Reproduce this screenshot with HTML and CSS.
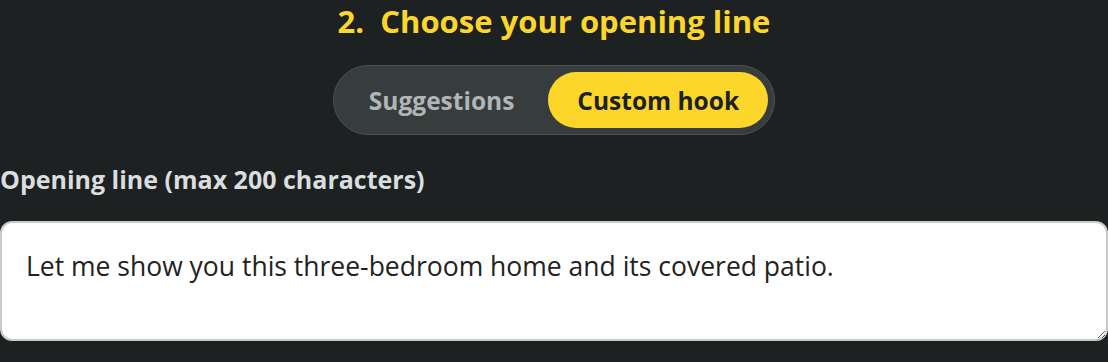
FILE: index.html
```
<!DOCTYPE html>
<html lang="en">
<head>
    <meta charset="UTF-8">
    <meta name="viewport" content="width=device-width, initial-scale=1.0">
    <title>Opening line</title>
    <link rel="stylesheet" href="styles.css">
</head>
<body>
    <div class="step">
        <h2 class="step-title">2.&nbsp; Choose your opening line</h2>
        <div class="toggle-row">
            <div class="toggle">
                <button class="toggle-btn">Suggestions</button>
                <button class="toggle-btn active">Custom hook</button>
            </div>
        </div>
        <label class="field-label" for="hook-input">Opening line (max 200 characters)</label>
        <textarea id="hook-input" class="hook-input" maxlength="200">Let me show you this three-bedroom home and its covered patio.</textarea>
    </div>
</body>
</html>
```

FILE: styles.css
```
body, html {
    margin: 0;
    padding: 0;
    background-color: #1d2122;
    font-family: "Open Sans", "Liberation Sans", sans-serif;
}
.step {
    display: flex;
    flex-direction: column;
    padding-bottom: 20px;
}
.step-title {
    margin: 2px 0 0;
    text-align: center;
    color: #fcd62a;
    font-size: 31px;
    font-weight: 700;
    line-height: 38px;
}
.toggle-row {
    display: flex;
    justify-content: center;
    margin-top: 25px;
}
.toggle {
    display: flex;
    gap: 5px;
    padding: 6px;
    background-color: #373c3d;
    border: 1px solid #4c5253;
    border-radius: 36px;
}
.toggle-btn {
    font-family: inherit;
    font-size: 24.5px;
    font-weight: 700;
    color: #b0b6b8;
    background: none;
    border: none;
    border-radius: 30px;
    padding: 0 29px;
    height: 56px;
    cursor: pointer;
}
.toggle-btn.active {
    background-color: #fcd62a;
    color: #1d2122;
}
.field-label {
    margin-top: 29px;
    color: #dadede;
    font-size: 25px;
    font-weight: 700;
    line-height: 30px;
}
.hook-input {
    margin-top: 27px;
    box-sizing: border-box;
    width: 100%;
    height: 120px;
    padding: 26px 24px;
    font-family: inherit;
    font-size: 26.5px;
    line-height: 34px;
    color: #222;
    background-color: #fff;
    border: 2px solid #c9c9c9;
    border-radius: 12px;
    resize: vertical;
}
```
